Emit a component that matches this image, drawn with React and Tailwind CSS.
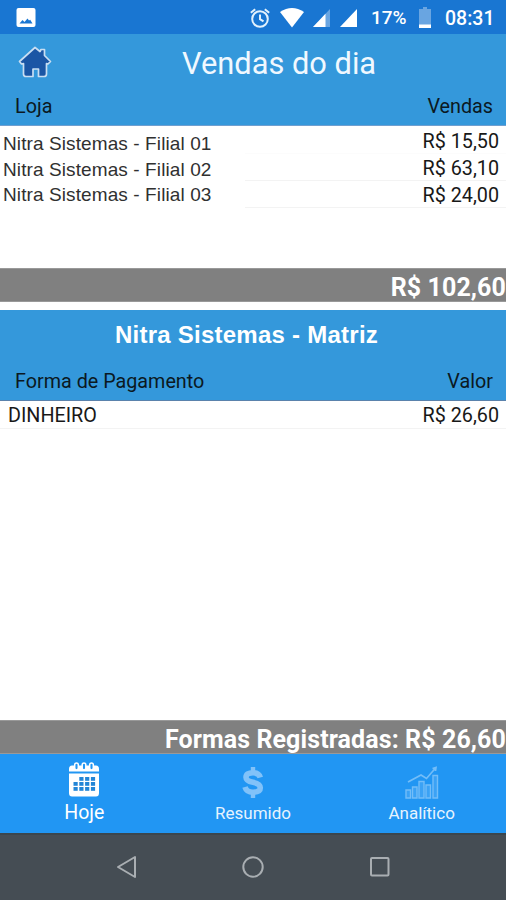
import React from 'react'

const sales = [
  { store: 'Nitra Sistemas - Filial 01', value: 'R$ 15,50' },
  { store: 'Nitra Sistemas - Filial 02', value: 'R$ 63,10' },
  { store: 'Nitra Sistemas - Filial 03', value: 'R$ 24,00' },
]

const payments = [{ method: 'DINHEIRO', value: 'R$ 26,60' }]

function StatusBar() {
  return (
    <div className="flex h-[34px] items-center bg-[#1976d2] pl-4 pr-[11px] pt-px text-white">
      <svg className="h-[19px] w-[20px]" viewBox="0 0 20 19">
        <rect x="0.5" width="19" height="19" rx="2" fill="currentColor" />
        <path d="M3.5 15.5 L6.5 12 L8.5 14 L11.5 10.5 L13 12.5 L14.2 11.8 L16.5 15.5 Z" fill="#1976d2" />
      </svg>

      {/* Alarm */}
      <svg className="ml-auto h-[20px] w-[20px] text-[#e3f2fd]" viewBox="0 0 20 20" fill="none" stroke="currentColor" strokeWidth="2">
        <circle cx="10" cy="11" r="7.8" />
        <path d="M0.8 4.8 L5.2 1.2 M19.2 4.8 L14.8 1.2 M10 6.5 V11.2 L13.5 13.4" />
      </svg>

      {/* Wifi and signal */}
      <svg className="ml-[10px] h-[20px] w-[24px]" viewBox="0 0 24 20" fill="currentColor">
        <path d="M0 4 Q12 -4 24 4 L12 19.5 Z" />
      </svg>
      <svg className="ml-[9px] h-[18px] w-[17px]" viewBox="0 0 17 18" fill="currentColor">
        <path d="M17 0 V18 H0 Z" opacity="0.35" />
        <path d="M12.5 4.8 V18 H0 Z" />
      </svg>
      <svg className="ml-[10px] h-[18px] w-[17px]" viewBox="0 0 17 18" fill="currentColor">
        <path d="M17 0 V18 H0 Z" />
      </svg>

      <span className="ml-[14px] w-[37px] whitespace-nowrap pt-0.5 text-[19px] font-medium">17%</span>
      <svg className="ml-[11px] h-[21px] w-[12px]" viewBox="0 0 12 21" fill="currentColor">
        <path d="M4 0 H8 V2 H12 V21 H0 V2 H4 Z" opacity="0.35" />
        <path d="M0 17.5 H12 V21 H0 Z" />
      </svg>
      <span className="ml-[14px] w-[50px] whitespace-nowrap pt-0.5 text-[19.5px] font-medium">08:31</span>
    </div>
  )
}

function HomeIcon() {
  return (
    <svg className="mt-[-4px] h-[33px] w-[34px]" viewBox="0 0 34 33">
      <path
        d="M17 1.5 L22 5.5 L23 3.5 H26.5 V9.5 L32.5 15.5 L30 18 L28.5 17.5 V28 Q28.5 30.5 26 30.5 H20.5 V23 H15 V30.5 H8 Q5.5 30.5 5.5 28 V17.5 L3.5 18 L1.5 15.5 Z"
        fill="#1b56a5"
        stroke="#c9def2"
        strokeWidth="1.7"
        strokeLinejoin="round"
      />
    </svg>
  )
}

function CalendarIcon() {
  return (
    <svg className="h-[35px] w-[32px]" viewBox="0 0 32 35">
      <path d="M1 9.5 V7 Q1 3.5 4 3.5 H28 Q31 3.5 31 7 V9.5 Z" fill="white" />
      <path d="M1 11.5 H31 V31 Q31 34.5 28 34.5 H4 Q1 34.5 1 31 Z" fill="white" />
      {[8.5, 16, 23.5].map(x => (
        <rect key={x} x={x - 1.8} y="0.9" width="3.6" height="7" rx="1.8" fill="#2196f3" stroke="white" strokeWidth="1.5" />
      ))}
      {[15, 20, 25].map((y, row) =>
        [5.5, 11.3, 17.1, 22.9].map((x, col) =>
          row === 0 && col === 0 ? null : (
            <rect key={`${x}-${y}`} x={x} y={y} width="4.2" height="3.8" fill="#2385d6" />
          )
        )
      )}
    </svg>
  )
}

function DollarIcon() {
  return (
    <svg className="h-[31px] w-[22px]" viewBox="0 0 22 31" fill="none" stroke="#81c2f9">
      <path d="M18.3 10.5 Q17 5.8 11 5.8 Q4 5.8 4 10.2 Q4 14 11 15.3 Q18.3 16.8 18.3 20.8 Q18.3 25.2 11 25.2 Q4.5 25.2 3 20" strokeWidth="5.6" />
      <path d="M11 0 V6 M11 25 V31" strokeWidth="4.4" />
    </svg>
  )
}

function ChartIcon() {
  return (
    <svg className="h-[33px] w-[34px]" viewBox="0 0 34 33" fill="#3ba2f5" stroke="#73bdf8" strokeWidth="1.4">
      <path d="M1 24 H5.5 V32 H1 Z M7.5 21 H12 V32 H7.5 Z M14 15.5 H19 V32 H14 Z M21 19 H25.5 V32 H21 Z M28 9.5 H32.5 V32 H28 Z" />
      <path d="M3 16 L16 9 L21.5 12.5 L31 1.5 M27.5 2.5 L31 1.5 L30.5 5" fill="none" strokeWidth="1.7" />
    </svg>
  )
}

function ColumnHeads({ left, right }) {
  return (
    <div className="flex justify-between pl-[15px] pr-[13px] pt-px text-[19.75px] leading-[24px] text-[#0b1822]">
      <span>{left}</span>
      <span>{right}</span>
    </div>
  )
}

function TotalBar({ children }) {
  return (
    <div className="flex h-[34px] items-center justify-end border-y border-[#999] bg-[#808080] pt-[5px] text-[25px] font-bold leading-none tracking-[0.1px] text-white">
      <span className="whitespace-nowrap">{children}</span>
    </div>
  )
}

function BottomTabs() {
  return (
    <nav className="grid h-[79px] grid-cols-3 bg-[#2196f3] text-[#e6f3fe]">
      <div className="flex flex-col items-center pt-2">
        <CalendarIcon />
        <span className="mt-[4px] text-[19.5px] leading-[24px] text-white">Hoje</span>
      </div>
      <div className="flex flex-col items-center pt-[13px]">
        <DollarIcon />
        <span className="mt-[3px] text-[17px] leading-[24px]">Resumido</span>
      </div>
      <div className="flex flex-col items-center pt-3">
        <ChartIcon />
        <span className="mt-[2px] text-[17px] leading-[24px]">Analítico</span>
      </div>
    </nav>
  )
}

function SystemNav() {
  return (
    <div className="flex h-[67px] items-center justify-center gap-[104px] border-t-2 border-[#3b464d] bg-[#454d54] pb-0.5 text-[#a9aeb2]">
      <svg className="h-[24px] w-[22px]" viewBox="0 0 22 24" fill="none" stroke="currentColor" strokeWidth="2">
        <path d="M20 2 V22 L3 12 Z" strokeLinejoin="round" />
      </svg>
      <svg className="h-[24px] w-[24px]" viewBox="0 0 24 24" fill="none" stroke="currentColor" strokeWidth="2">
        <circle cx="12" cy="12" r="9.7" />
      </svg>
      <svg className="h-[24px] w-[22px]" viewBox="0 0 22 24" fill="none" stroke="currentColor" strokeWidth="2">
        <rect x="2" y="3" width="17.5" height="17.5" rx="1" />
      </svg>
    </div>
  )
}

export default function App() {
  return (
    <div className="flex h-[900px] w-[506px] flex-col overflow-hidden bg-white font-[Roboto,sans-serif]">
      <StatusBar />

      {/* Sales of the day */}
      <header className="h-[92px] border-b border-[#6f9fd0] bg-[#3498db]">
        <div className="flex h-[60px] items-center pl-[18px]">
          <HomeIcon />
          <h1 className="ml-[130px] whitespace-nowrap text-[30.8px] leading-none text-[#f0f8ff]">Vendas do dia</h1>
        </div>
        <ColumnHeads left="Loja" right="Vendas" />
      </header>

      <div className="flex h-[142px] justify-between">
        <ul className="pl-[3px] pt-[5px] font-['Liberation_Sans',sans-serif] text-[19px] leading-[25.5px] tracking-[0.1px] text-[#303030]">
          {sales.map(s => (
            <li key={s.store} className="whitespace-nowrap">{s.store}</li>
          ))}
        </ul>
        <ul className="w-[261px] pt-[1px] text-[19.75px] text-[#181818]">
          {sales.map(s => (
            <li key={s.store} className="flex h-[27px] items-center justify-end border-b border-[#f3f3f3] pr-[7px] pt-[3px] first:border-[#fcfcfc]">
              {s.value}
            </li>
          ))}
        </ul>
      </div>
      <TotalBar>R$ 102,60</TotalBar>

      {/* Payment methods */}
      <section className="mt-2 h-[91px] border-b border-[#5a82ac] bg-[#3498db]">
        <h2 className="pt-[11px] pr-[13px] text-center font-['Liberation_Sans',sans-serif] text-[24px] font-bold leading-[28px] tracking-[0.25px] text-white">
          Nitra Sistemas - Matriz
        </h2>
        <div className="pt-[20px]">
          <ColumnHeads left="Forma de Pagamento" right="Valor" />
        </div>
      </section>
      <ul className="flex-1 text-[19.75px] text-[#181818]">
        {payments.map(p => (
          <li key={p.method} className="flex h-[28px] items-center justify-between border-b border-[#f3f3f3] pl-[8px] pr-[7px] pt-[3px]">
            <span>{p.method}</span>
            <span>{p.value}</span>
          </li>
        ))}
      </ul>
      <TotalBar>Formas Registradas: R$ 26,60</TotalBar>

      <BottomTabs />
      <SystemNav />
    </div>
  )
}
